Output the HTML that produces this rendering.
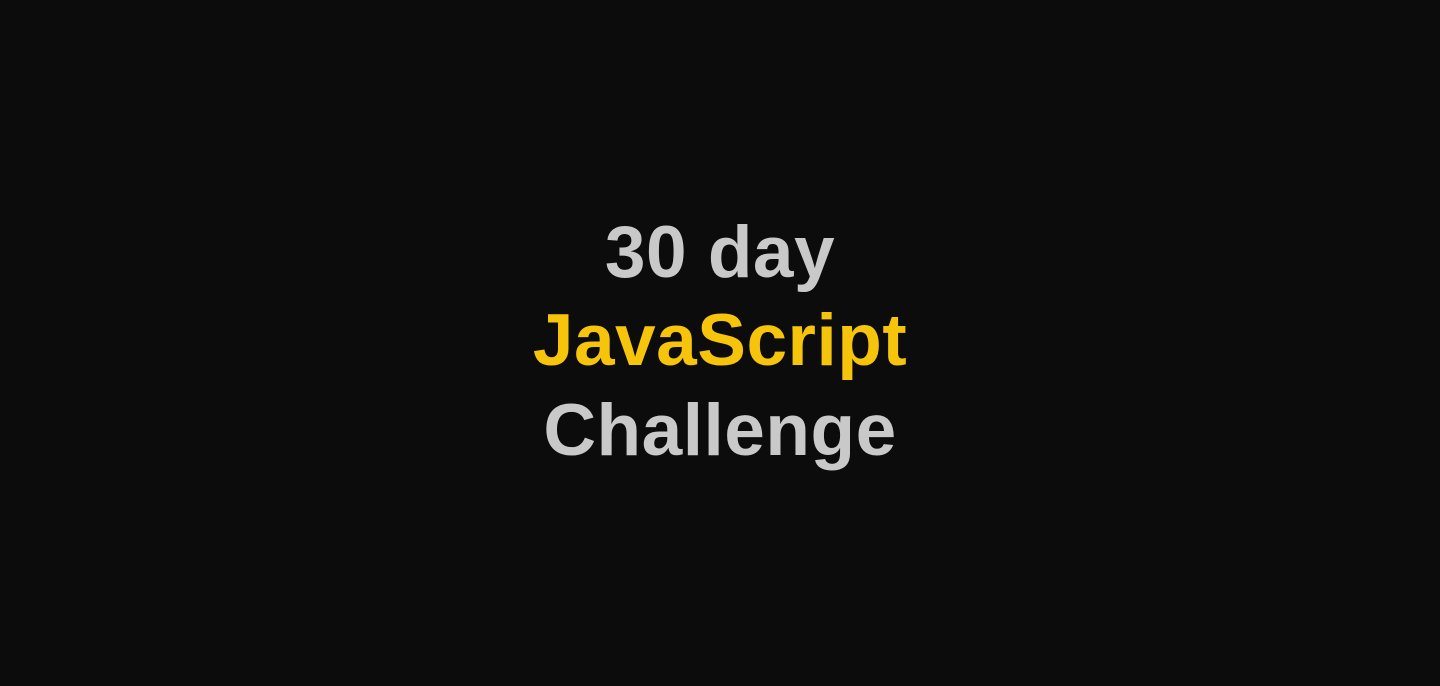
<!DOCTYPE html>
<html><head><meta charset="utf-8"><style>
html,body{margin:0;padding:0;width:1440px;height:686px;background:#0c0c0c;overflow:hidden}
.t{position:absolute;left:0;width:1440px;text-align:center;font-family:"Liberation Sans",sans-serif;font-weight:bold;font-size:73px;line-height:88px;letter-spacing:0.5px}
.g{color:#c9c9c9}.y{color:#f7c40c}
</style></head><body>
<div class="t g" style="top:209px">30 day</div>
<div class="t y" style="top:297px">JavaScript</div>
<div class="t g" style="top:387px">Challenge</div>
</body></html>
